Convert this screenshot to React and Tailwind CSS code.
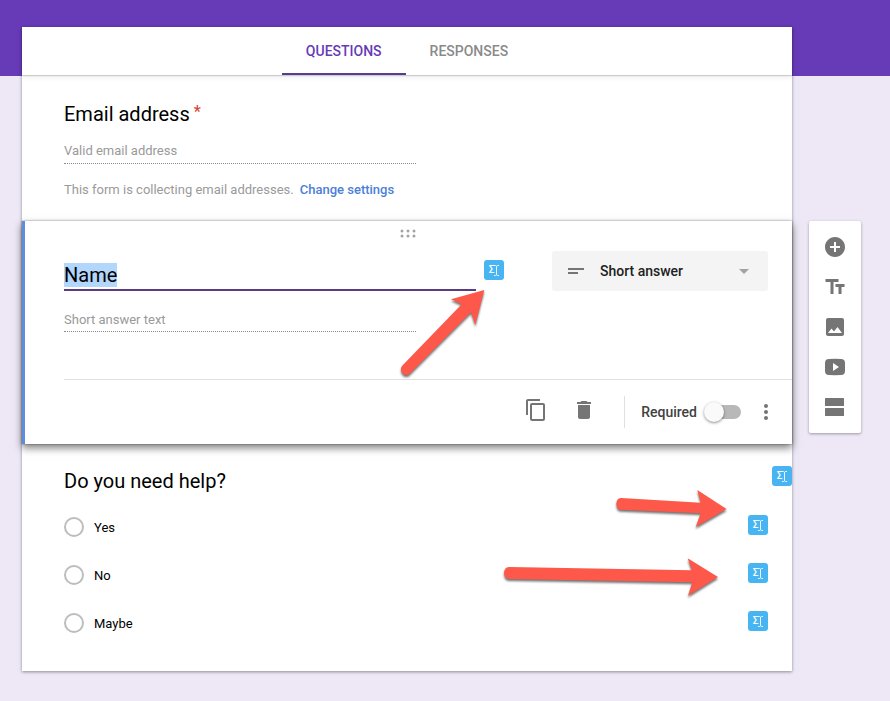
import { useEffect, useRef, useState } from 'react'
import {
  MdAddCircle,
  MdArrowDropDown,
  MdContentCopy,
  MdDelete,
  MdImage,
  MdMoreVert,
  MdShortText,
  MdTextFields,
} from 'react-icons/md'

const OPTIONS = ['Yes', 'No', 'Maybe']

function VideoIcon({ className }) {
  return (
    <svg viewBox="0 0 24 24" fill="currentColor" className={className} aria-hidden="true">
      <path fillRule="evenodd" d="M6 4Q12 3.700 18 4Q22 4 22 8V16Q22 20 18 20Q12 20.300 6 20Q2 20 2 16V8Q2 4 6 4zM10 8v8l6-4z" />
    </svg>
  )
}

function SectionIcon({ className }) {
  return (
    <svg viewBox="0 0 24 24" fill="currentColor" className={className} aria-hidden="true">
      <rect x="2" y="3" width="19" height="8" rx="0.6" />
      <rect x="2" y="13" width="19" height="8" rx="0.6" />
    </svg>
  )
}

const TOOLS = [
  { label: 'Add question', Icon: MdAddCircle },
  { label: 'Add title and description', Icon: MdTextFields },
  { label: 'Add image', Icon: MdImage },
  { label: 'Add video', Icon: VideoIcon },
  { label: 'Add section', Icon: SectionIcon },
]

// Arrows are anchored to the badge they point at
const ARROWS = {
  name: {
    box: 'absolute -left-[88px] top-6 w-24 h-[100px]',
    viewBox: '0 0 96 100',
    d: 'M88.3 6L55 15.2L65.7 20.3L6 82C3 86 7 93.500 13 90.500L75 28.300L79.300 41Z',
  },
  yes: {
    box: 'absolute -left-[140px] -top-[31px] w-32 h-[50px]',
    viewBox: '0 0 128 50',
    d: 'M118.600 25L89.300 6L92.700 18.700L13 14C7 14 7 25.500 12.500 25.700L92.700 29.200L87.700 43Z',
  },
  no: {
    box: 'absolute -left-[252px] -top-[11px] w-[232px] h-[50px]',
    viewBox: '0 0 232 50',
    d: 'M222 25L191.700 6.300L195.700 18.300L13 15C6.500 15 6.500 27 13 27L196.300 30.300L192 43.700Z',
  },
}

function PipeBadge({ label, arrow, className = '' }) {
  return (
    <div className={`relative shrink-0 ${className}`}>
      <button
        type="button"
        aria-label={label}
        className="flex size-5 items-center justify-center rounded-[3px] bg-[#48b4f2] text-white"
      >
        <span className="text-[10px] leading-3 font-medium">Σ</span>
        <svg viewBox="0 0 5 11" className="h-[11px] w-[5px]" fill="none" stroke="currentColor" strokeWidth="0.9" aria-hidden="true">
          <path d="M0 0.500H1.600L2.500 1.200L3.400 0.500H5M2.500 1.200V9.800M0 10.500H1.600L2.500 9.800L3.400 10.500H5" />
        </svg>
      </button>
      {arrow && (
        <svg
          viewBox={arrow.viewBox}
          className={`${arrow.box} pointer-events-none z-20 max-w-none drop-shadow-[0_2px_1px_rgba(0,0,0,0.55)]`}
          aria-hidden="true"
        >
          <path d={arrow.d} fill="#fd5849" />
        </svg>
      )}
    </div>
  )
}

function Tabs() {
  const [tab, setTab] = useState('QUESTIONS')
  return (
    <nav className="relative flex h-12 justify-center shadow-[0_1px_1px_rgba(0,0,0,0.16),0_2px_6px_rgba(0,0,0,0.08)]">
      {['QUESTIONS', 'RESPONSES'].map((name) => (
        <button
          key={name}
          type="button"
          onClick={() => setTab(name)}
          className={`border-b-2 px-6 pt-0.5 text-sm font-medium ${
            tab === name ? 'border-[#5b3a94] text-[#673ab7]' : 'border-transparent text-[#8a8a8a]'
          }`}
        >
          {name}
        </button>
      ))}
    </nav>
  )
}

function EmailSection() {
  return (
    <section className="px-[42px] pt-[27px] pb-[21px]">
      <label htmlFor="email" className="block text-xl leading-6">
        Email address<span className="ml-1 align-top text-base leading-5 font-medium text-[#db4437]">*</span>
      </label>
      <input
        id="email"
        disabled
        placeholder="Valid email address"
        className="mt-3.5 block h-6 w-full max-w-[352px] border-b border-dotted border-[#8c8c8c] pb-0.5 text-[13px] placeholder:text-[#9a9a9a]"
      />
      <p className="mt-4 text-[13px] leading-5 text-[#9a9a9a]">
        This form is collecting email addresses.
        <a href="#settings" className="ml-1.5 font-medium text-[#4a80d9]">Change settings</a>
      </p>
    </section>
  )
}

function NameCard() {
  const titleRef = useRef(null)

  useEffect(() => {
    titleRef.current?.focus()
    titleRef.current?.select()
  }, [])

  return (
    <section className="relative z-10 border-l-[3px] border-[#5b8ee0] bg-white pl-[39px] shadow-[0_0_2px_rgba(0,0,0,0.4),0_4px_8px_rgba(0,0,0,0.5)]">
      <div className="flex justify-center pt-2 pr-10">
        <svg viewBox="0 0 16 9" className="h-[9px] w-4" fill="#a3a3a3" aria-hidden="true">
          {[2, 8, 14].map((cx) => (
            <g key={cx}>
              <circle cx={cx} cy="2" r="1.500" />
              <circle cx={cx} cy="7" r="1.500" />
            </g>
          ))}
        </svg>
      </div>

      <div className="mt-[13px] flex pr-6">
        <div className="flex flex-1 items-end">
          <input
            ref={titleRef}
            aria-label="Question"
            defaultValue="Name"
            className="h-7 w-full border-b-2 border-[#5b3a84] pb-0.5 text-xl leading-6 outline-none selection:bg-[#b3d6fd] selection:text-black"
          />
        </div>
        <PipeBadge label="Pipe text into question" arrow={ARROWS.name} className="mt-[9px] mr-12 ml-2" />
        <div className="relative w-[216px] shrink-0">
          <select
            aria-label="Question type"
            className="h-10 w-full appearance-none rounded-[3px] bg-[#f4f4f4] pl-12 text-sm font-medium text-[#212121]"
          >
            <option>Short answer</option>
            <option>Paragraph</option>
            <option>Multiple choice</option>
          </select>
          <MdShortText className="pointer-events-none absolute top-2 left-3 size-6 text-[#757575]" />
          <MdArrowDropDown className="pointer-events-none absolute top-2 right-3 size-6 text-[#a3a3a3]" />
        </div>
      </div>

      <input
        disabled
        aria-label="Answer"
        placeholder="Short answer text"
        className="mt-[17px] block h-6 w-full max-w-[352px] border-b border-dotted border-[#8c8c8c] text-[13px] placeholder:text-[#9a9a9a]"
      />

      <div className="mt-[47px] flex h-[65px] items-center justify-end border-t border-[#e0e0e0] pr-3.5">
        <div className="mr-7 flex gap-6 pb-1 text-[#757575]">
          <button type="button" aria-label="Duplicate"><MdContentCopy className="size-6" /></button>
          <button type="button" aria-label="Delete"><MdDelete className="size-6" /></button>
        </div>
        <label className="flex h-8 items-center border-l border-[#e0e0e0] pl-4 text-sm font-medium text-[#424242]">
          Required
          <input type="checkbox" role="switch" className="peer sr-only" />
          <span className="ml-[7px] flex h-3.5 w-[37px] items-center rounded-full bg-linear-to-r from-transparent from-10% to-[#b8b8b8] to-10% peer-checked:justify-end">
            <span className="size-5 shrink-0 rounded-full bg-[#fafafa] shadow-[0_1px_3px_rgba(0,0,0,0.45)]" />
          </span>
        </label>
        <button type="button" aria-label="More options" className="ml-[13px] text-[#757575]">
          <MdMoreVert className="size-6" />
        </button>
      </div>
    </section>
  )
}

function HelpSection() {
  return (
    <section className="pt-[22px] pb-6 pl-[42px]">
      <div className="flex items-start justify-between">
        <h2 id="help" className="mt-[3px] mb-2.5 text-xl leading-6">Do you need help?</h2>
        <PipeBadge label="Pipe text into question" />
      </div>
      <div role="radiogroup" aria-labelledby="help" className="pr-6">
        {OPTIONS.map((option) => (
          <div key={option} className="flex h-12 items-center justify-between">
            <label className="flex items-center gap-2.5 text-[13px] leading-4">
              <input
                type="radio"
                name="help"
                value={option}
                className="size-5 appearance-none rounded-full border-2 border-[#bdbdbd] checked:border-[#673ab7]"
              />
              <span className="pt-0.5">{option}</span>
            </label>
            <PipeBadge label={`Pipe text into ${option}`} arrow={ARROWS[option.toLowerCase()]} className="mb-1" />
          </div>
        ))}
      </div>
    </section>
  )
}

function Toolbar() {
  return (
    <aside className="mt-[194px] flex shrink-0 flex-col gap-4 rounded-[2px] bg-white px-3.5 py-3.5 text-[#757575] shadow-[0_1px_3px_rgba(0,0,0,0.35)]">
      {TOOLS.map(({ label, Icon }) => (
        <button key={label} type="button" aria-label={label}>
          <Icon className="size-6" />
        </button>
      ))}
    </aside>
  )
}

export default function App() {
  return (
    <div className="flex min-h-screen items-start gap-[17px] bg-[linear-gradient(#673ab7_76px,#ede7f6_76px)] pt-[27px] pr-[29px] pb-[30px] pl-[22px] font-['Roboto',sans-serif] text-black">
      <main className="min-w-0 flex-1 bg-white shadow-[0_1px_3px_rgba(0,0,0,0.4)]">
        <Tabs />
        <EmailSection />
        <NameCard />
        <HelpSection />
      </main>
      <Toolbar />
    </div>
  )
}
